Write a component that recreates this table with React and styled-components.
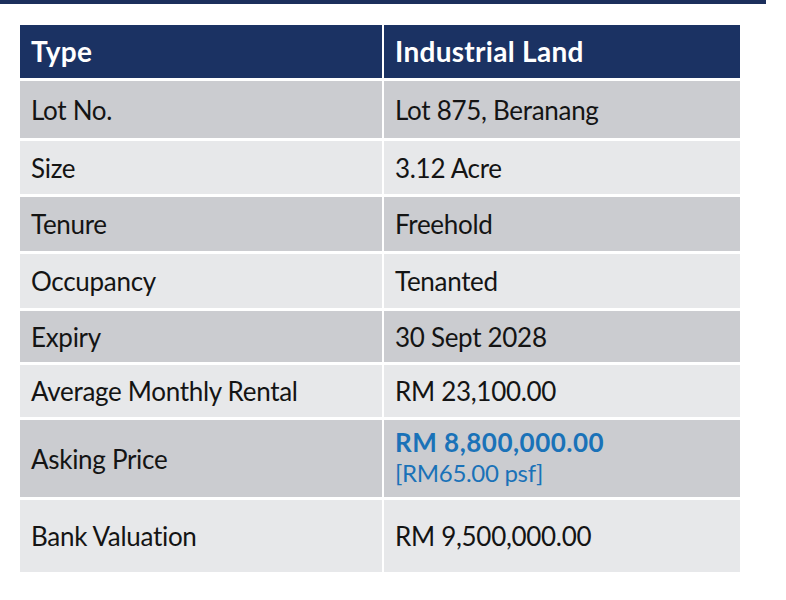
import React from "react";
import styled, { createGlobalStyle } from "styled-components";

const Global = createGlobalStyle`
  html, body { margin: 0; padding: 0; background: #fff; }
  body { font-family: Lato, "Open Sans", sans-serif; }
`;

const Page = styled.div`
  width: 786px;
  height: 600px;
  display: flex;
  flex-direction: column;
`;

const TopBar = styled.div`
  width: 766px;
  height: 4px;
  background: #1c2f5c;
`;

const Table = styled.div`
  margin: 21px 0 0 20px;
  width: 720px;
  display: grid;
  grid-template-columns: 362px 356px;
  column-gap: 2px;
  row-gap: 3px;
`;

const Cell = styled.div`
  height: ${(p) => p.$h}px;
  box-sizing: border-box;
  display: flex;
  flex-direction: column;
  justify-content: center;
  padding-left: ${(p) => (p.$right ? 11 : 11)}px;
  padding-bottom: ${(p) => (p.$head ? 2 : 0)}px;
  background: ${(p) =>
    p.$head ? "#1b3263" : p.$dark ? "#cbccd0" : "#e7e8ea"};
  color: ${(p) => (p.$head ? "#ffffff" : "#141414")};
  font-size: ${(p) => (p.$head ? 28 : 26)}px;
  font-weight: ${(p) => (p.$head ? 700 : 400)};
  letter-spacing: ${(p) => (p.$head ? "0.3px" : "-0.3px")};
  white-space: nowrap;
`;

const Price = styled.div`
  color: #1a72b8;
  font-weight: 700;
  font-size: 26px;
  letter-spacing: 0.5px;
  line-height: 31px;
`;

const Psf = styled.div`
  color: #1a72b8;
  font-size: 24px;
  line-height: 29px;
  padding-bottom: 4px;
`;

const rows = [
  { k: "Lot No.", v: "Lot 875, Beranang", h: 57 },
  { k: "Size", v: "3.12 Acre", h: 53 },
  { k: "Tenure", v: "Freehold", h: 54 },
  { k: "Occupancy", v: "Tenanted", h: 54 },
  { k: "Expiry", v: "30 Sept 2028", h: 51 },
  { k: "Average Monthly Rental", v: "RM 23,100.00", h: 52 },
  { k: "Asking Price", v: "price", h: 77 },
  { k: "Bank Valuation", v: "RM 9,500,000.00", h: 72 },
];

export default function App() {
  return (
    <Page>
      <Global />
      <TopBar />
      <Table>
        <Cell $head $h={53}>Type</Cell>
        <Cell $head $right $h={53}>Industrial Land</Cell>
        {rows.map((r, i) => (
          <React.Fragment key={r.k}>
            <Cell $dark={i % 2 === 0} $h={r.h}>{r.k}</Cell>
            <Cell $dark={i % 2 === 0} $right $h={r.h}>
              {r.v === "price" ? (
                <>
                  <Price>RM 8,800,000.00</Price>
                  <Psf>[RM65.00 psf]</Psf>
                </>
              ) : (
                r.v
              )}
            </Cell>
          </React.Fragment>
        ))}
      </Table>
    </Page>
  );
}
